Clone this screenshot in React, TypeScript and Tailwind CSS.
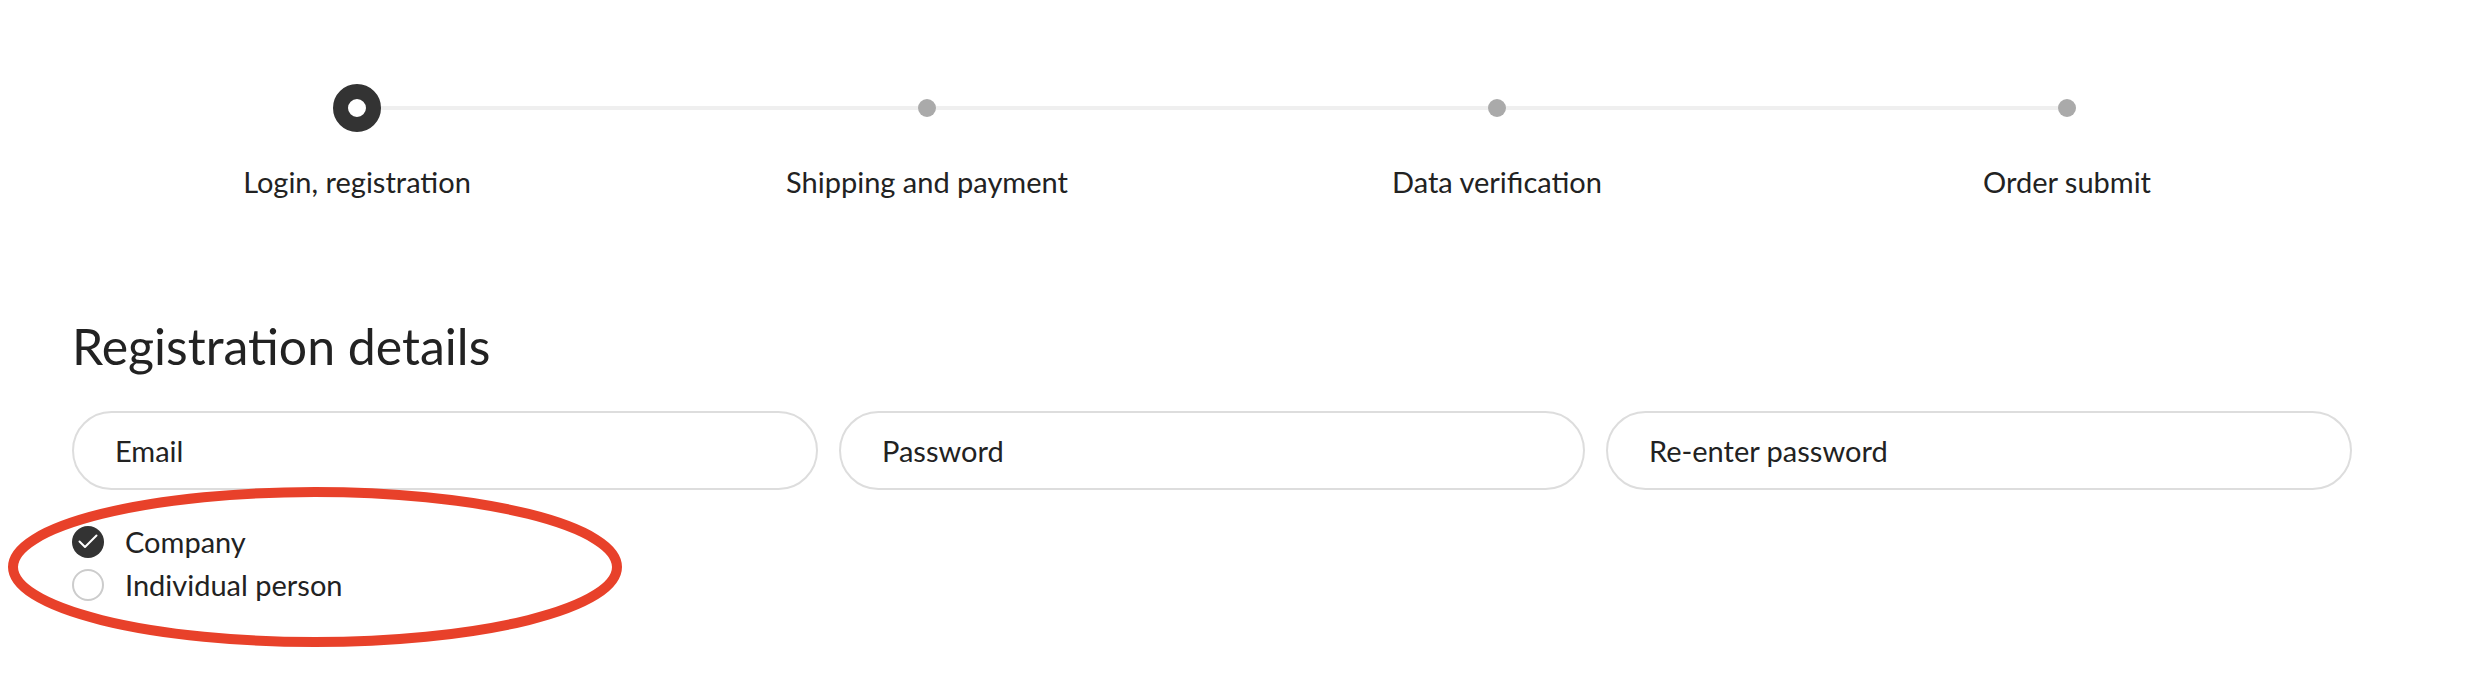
const steps = ['Login, registration', 'Shipping and payment', 'Data verification', 'Order submit']

function Step({ label, index }: { label: string; index: number }) {
  const first = index === 0
  const last = index === steps.length - 1
  return (
    <div className="flex flex-col items-center">
      <div className="flex h-12 w-full items-center">
        <div className={first ? 'h-1 flex-1' : 'h-1 flex-1 bg-[#efefef]'} />
        {first ? (
          <div className="h-12 w-12 rounded-full border-[15px] border-[#333333] bg-white" />
        ) : (
          <div className="h-[18px] w-[18px] rounded-full bg-[#aaaaaa]" />
        )}
        <div className={last ? 'h-1 flex-1' : 'h-1 flex-1 bg-[#efefef]'} />
      </div>
      <div className="mt-[32px] text-[29px] leading-[36px] text-[#222222]">{label}</div>
    </div>
  )
}

function Field({ placeholder }: { placeholder: string }) {
  return (
    <input
      className="h-[79px] w-full rounded-full border-2 border-solid border-[#dddddd] bg-white px-[41px] text-[29px] text-[#222222] outline-none placeholder:text-[#222222]"
      type="text"
      placeholder={placeholder}
    />
  )
}

function Option({ label, checked }: { label: string; checked?: boolean }) {
  return (
    <label className="flex h-[43px] items-center gap-[21px]">
      {checked ? (
        <span className="flex h-8 w-8 items-center justify-center rounded-full bg-[#333333]">
          <svg width="20" height="15" viewBox="0 0 20 15" fill="none">
            <path d="M1.5 7.5 L7 13 L18.5 1.5" stroke="white" strokeWidth="2" strokeLinecap="round" strokeLinejoin="round" />
          </svg>
        </span>
      ) : (
        <span className="h-8 w-8 rounded-full border-2 border-solid border-[#cccccc] bg-white" />
      )}
      <span className="text-[29px] text-[#222222]">{label}</span>
    </label>
  )
}

export default function App() {
  return (
    <div
      className="relative h-[686px] w-full overflow-hidden bg-white px-[72px] pt-[84px]"
      style={{ fontFamily: 'Lato, "Noto Sans", sans-serif' }}
    >
      <div className="grid w-[2280px] grid-cols-4">
        {steps.map((s, i) => (
          <Step key={s} label={s} index={i} />
        ))}
      </div>

      <h1 className="mt-[116px] text-[50px] leading-[60px] text-[#222222]">Registration details</h1>

      <div className="mt-[35px] grid w-[2280px] grid-cols-3 gap-[21px]">
        <Field placeholder="Email" />
        <Field placeholder="Password" />
        <Field placeholder="Re-enter password" />
      </div>

      <div className="mt-[30px] flex flex-col">
        <Option label="Company" checked />
        <Option label="Individual person" />
      </div>

      <svg className="pointer-events-none absolute left-0 top-0" width="640" height="686" viewBox="0 0 640 686">
        <ellipse cx="315" cy="567" rx="302" ry="75" fill="none" stroke="#e8412a" strokeWidth="10" />
      </svg>
    </div>
  )
}
